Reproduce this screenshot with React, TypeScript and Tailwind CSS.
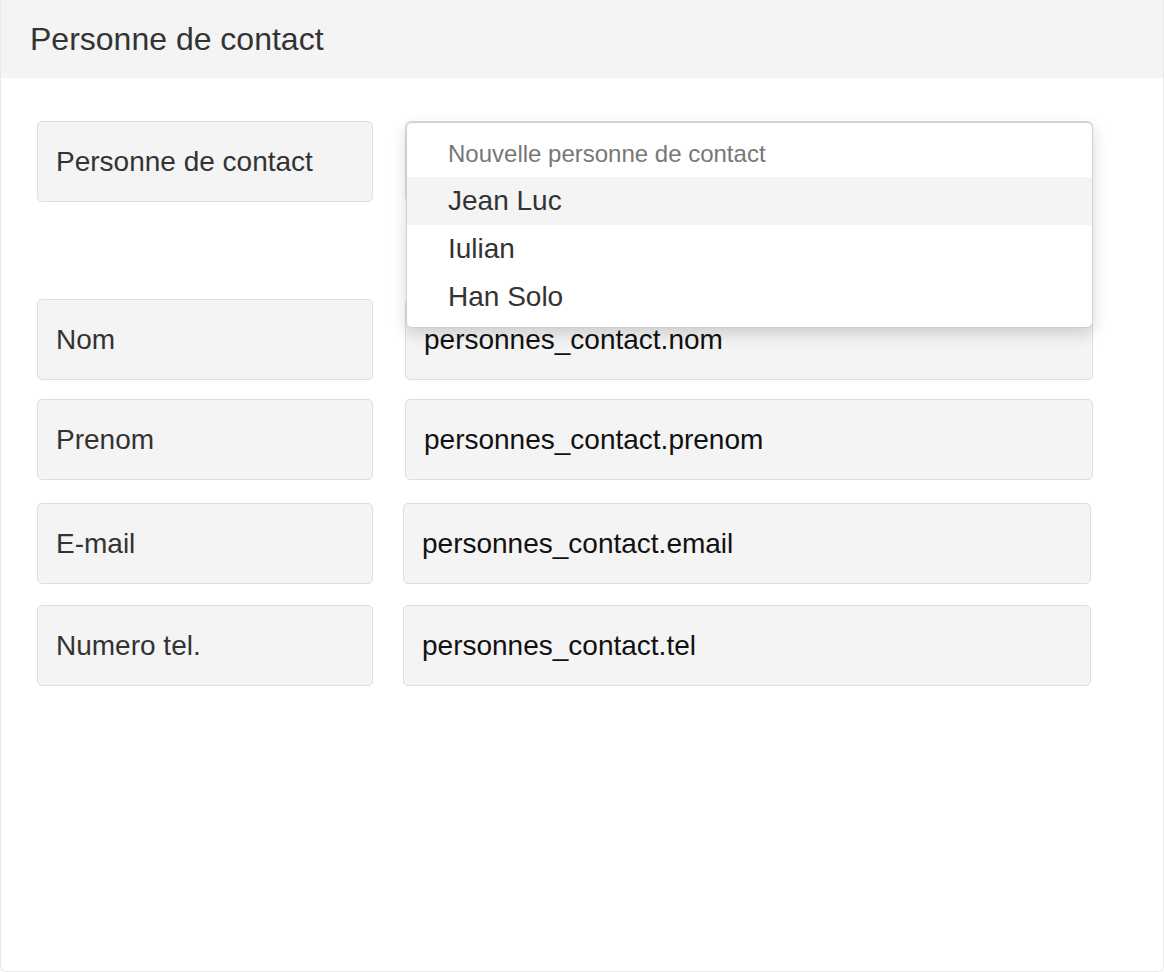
import React from 'react';

const fields = [
  { label: 'Nom', value: 'personnes_contact.nom', mt: 'mt-[97px]', ml: 'ml-[32px]' },
  { label: 'Prenom', value: 'personnes_contact.prenom', mt: 'mt-[19px]', ml: 'ml-[32px]' },
  { label: 'E-mail', value: 'personnes_contact.email', mt: 'mt-[23px]', ml: 'ml-[30px]' },
  { label: 'Numero tel.', value: 'personnes_contact.tel', mt: 'mt-[21px]', ml: 'ml-[30px]' },
];

const contacts = ['Jean Luc', 'Iulian', 'Han Solo'];

function Label({ children }: { children: React.ReactNode }) {
  return (
    <div className="w-[336px] h-[81px] shrink-0 flex items-center pl-[18px] bg-[#f4f4f4] border border-[#dedede] rounded-[5px] text-[28px] text-[#333]">
      {children}
    </div>
  );
}

export default function App() {
  return (
    <div className="h-[972px] bg-white font-['Liberation_Sans',Arial,sans-serif] border border-t-0 border-[#e9e9e9] rounded-b-[6px] overflow-hidden">
      <div className="h-[78px] bg-[#f4f4f4] flex items-center pl-[29px] pb-[1px] text-[32px] text-[#333]">
        Personne de contact
      </div>

      <div className="pl-[36px] pt-[43px]">
        {/* select row, with its open dropdown */}
        <div className="flex">
          <Label>Personne de contact</Label>
          <div className="relative ml-[32px]">
            <div className="w-[688px] h-[81px] bg-[#f4f4f4] border border-[#dedede] rounded-[5px]" />
            <div className="absolute left-[1px] top-[1px] w-[687px] bg-white border border-[#cfcfcf] rounded-[6px] py-[6px] shadow-[0_6px_16px_rgba(0,0,0,0.16)] z-10">
              <div className="h-[48px] flex items-center pl-[41px] pt-[2px] text-[24px] text-[#777]">
                Nouvelle personne de contact
              </div>
              {contacts.map((name, i) => (
                <div
                  key={name}
                  className={`h-[48px] flex items-center pl-[41px] text-[28px] text-[#333] ${i === 0 ? 'bg-[#f4f4f4]' : ''}`}
                >
                  {name}
                </div>
              ))}
            </div>
          </div>
        </div>

        {fields.map((f) => (
          <div key={f.label} className={`flex ${f.mt}`}>
            <Label>{f.label}</Label>
            <div className={`${f.ml} w-[688px] h-[81px] flex items-center pl-[18px] bg-[#f4f4f4] border border-[#dedede] rounded-[5px] text-[28px] text-[#111]`}>
              {f.value}
            </div>
          </div>
        ))}
      </div>
    </div>
  );
}
